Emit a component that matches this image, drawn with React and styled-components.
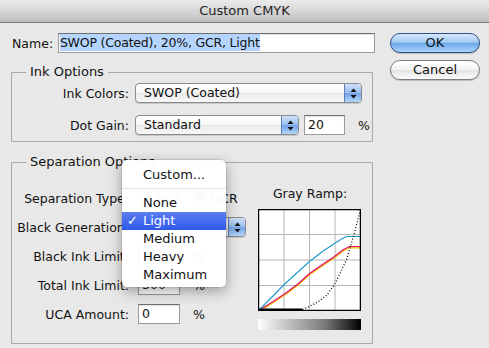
import React from "react";
import styled, { createGlobalStyle } from "styled-components";

const GlobalStyle = createGlobalStyle`
  html, body {
    margin: 0;
    padding: 0;
    background: #e8e8e8;
  }
  body {
    font-family: "DejaVu Sans", "Liberation Sans", sans-serif;
    font-size: 12.5px;
    color: #111;
  }
`;

const cyan = [
  [0, 101], [13, 88], [26.7, 74], [40, 62], [51, 52], [64, 42], [76, 34], [83, 29.5], [88, 27], [102, 27],
];
const red = [
  [0, 101], [13, 93], [26.7, 84], [40, 74], [51, 64], [64, 55], [76, 47], [85, 40], [91, 37], [102, 37],
];
const blackCurve = [
  [44, 100], [51, 97], [60, 92], [68, 86], [76, 75], [82, 63], [88, 50], [95, 27], [102, 0],
];
const pts = (list, dy = 0) => list.map(([x, y]) => `${x},${y + dy}`).join(" ");

const menuItems = ["None", "Light", "Medium", "Heavy", "Maximum"];

const Arrows = () => (
  <svg width="7" height="11" viewBox="0 0 7 11">
    <path d="M3.5 0.5 L6.5 4 L0.5 4 Z" fill="#111" />
    <path d="M3.5 10.5 L6.5 7 L0.5 7 Z" fill="#111" />
  </svg>
);

const Popup = ({ width, value }) => (
  <Select $width={width}>
    <SelectText>{value}</SelectText>
    <SelectArrow>
      <Arrows />
    </SelectArrow>
  </Select>
);

const GrayRamp = () => (
  <Graph width="103" height="102" viewBox="-0.5 -0.5 103 102">
    {[25.5, 51, 76.5].map((v) => (
      <g key={v}>
        <line x1={v} y1="0" x2={v} y2="101" stroke="#b4b4b4" strokeWidth="1" />
        <line x1="0" y1={v - 0.5} x2="102" y2={v - 0.5} stroke="#b4b4b4" strokeWidth="1" />
      </g>
    ))}
    <polyline points={pts(red, 1.3)} fill="none" stroke="#f5b800" strokeWidth="1.2" />
    <polyline points={pts(red)} fill="none" stroke="#e0106a" strokeWidth="1.2" />
    <polyline points={pts(cyan)} fill="none" stroke="#1a9ad0" strokeWidth="1.1" />
    <line x1="0" y1="100" x2="44" y2="100" stroke="#000" strokeWidth="2" />
    <polyline
      points={pts(blackCurve)}
      fill="none"
      stroke="#000"
      strokeWidth="1.2"
      strokeDasharray="1 2"
    />
    <rect x="0" y="0" width="102" height="101" fill="none" stroke="#000" strokeWidth="1.5" />
  </Graph>
);

const App = () => {
  return (
    <Window>
      <GlobalStyle />
      <TitleBar>Custom CMYK</TitleBar>
      <Body>
        <LeftColumn>
          <NameRow>
            <NameLabel>Name:</NameLabel>
            <TextField $width={318} $pl={1}>
              <Selected>SWOP (Coated), 20%, GCR, Light</Selected>
            </TextField>
          </NameRow>

          <Group>
            <Legend>Ink Options</Legend>
            <InkGrid>
              <Label>Ink Colors:</Label>
              <Popup width={227} value="SWOP (Coated)" />
              <Label>Dot Gain:</Label>
              <Inline>
                <Popup width={164} value="Standard" />
                <TextField $width={41} $ml={5}>20</TextField>
                <Percent>%</Percent>
              </Inline>
            </InkGrid>
          </Group>

          <Group $mt={12} $pb={13}>
            <Legend>Separation Options</Legend>
            <SepInner>
              <SepGrid>
                <Label>Separation Type:</Label>
                <Inline>
                  <Radio />
                  <RadioText>UCR</RadioText>
                  <Radio $checked />
                  <RadioText>GCR</RadioText>
                </Inline>
                <Label>Black Generation:</Label>
                <Popup width={108} value="Light" />
                <Label>Black Ink Limit:</Label>
                <Inline>
                  <TextField $width={42}>100</TextField>
                  <Percent>%</Percent>
                </Inline>
                <Label>Total Ink Limit:</Label>
                <Inline>
                  <TextField $width={42}>300</TextField>
                  <Percent>%</Percent>
                </Inline>
                <Label>UCA Amount:</Label>
                <Inline>
                  <TextField $width={42}>0</TextField>
                  <Percent>%</Percent>
                </Inline>
              </SepGrid>
              <RampColumn>
                <RampLabel>Gray Ramp:</RampLabel>
                <GrayRamp />
                <RampBar />
              </RampColumn>
            </SepInner>
          </Group>
        </LeftColumn>

        <Buttons>
          <Button $default>OK</Button>
          <Button>Cancel</Button>
        </Buttons>
      </Body>

      <Menu>
        <MenuItem>Custom...</MenuItem>
        <Separator />
        {menuItems.map((item) => (
          <MenuItem key={item} $active={item === "Light"}>
            {item === "Light" && <Check>✓</Check>}
            {item}
          </MenuItem>
        ))}
      </Menu>
    </Window>
  );
};

const Window = styled.div`
  position: relative;
  width: 489px;
  height: 348px;
  overflow: hidden;
  background: #e8e8e8;
`;

const TitleBar = styled.div`
  height: 22px;
  line-height: 22px;
  text-align: center;
  font-size: 13px;
  color: #222;
  background: linear-gradient(#ececec, #d2d2d2 60%, #bdbdbd);
  border-bottom: 1px solid #7a7a7a;
`;

const Body = styled.div`
  display: grid;
  grid-template-columns: 364px 90px;
  column-gap: 15px;
  padding: 10px 0 0 11px;
`;

const LeftColumn = styled.div`
  display: flex;
  flex-direction: column;
`;

const NameRow = styled.div`
  display: flex;
  align-items: center;
  height: 20px;
`;

const NameLabel = styled.span`
  width: 46px;
  padding-left: 1px;
`;

const TextField = styled.div`
  box-sizing: border-box;
  width: ${(p) => p.$width}px;
  height: 20px;
  margin-left: ${(p) => p.$ml || 0}px;
  padding: 0 3px 0 ${(p) => p.$pl ?? 3}px;
  line-height: 18px;
  background: #fff;
  border: 1px solid #9a9a9a;
  border-top-color: #6f6f6f;
  box-shadow: inset 0 1px 1px rgba(0, 0, 0, 0.12);
  white-space: nowrap;
  overflow: hidden;
`;

const Selected = styled.span`
  background: #b5d5ff;
  padding: 1px 0;
  letter-spacing: -0.2px;
`;

const Group = styled.fieldset`
  box-sizing: border-box;
  width: 362px;
  margin: ${(p) => p.$mt || 11}px 0 0 0;
  padding: 3px 0 ${(p) => p.$pb || 6}px 0;
  border: 1px solid #a8a8a8;
  min-width: 0;
`;

const Legend = styled.legend`
  margin-left: 14px;
  padding: 0 4px;
  line-height: 16px;
  font-size: 13px;
`;

const InkGrid = styled.div`
  display: grid;
  grid-template-columns: 117px 1fr;
  column-gap: 6px;
  row-gap: 12px;
  align-items: center;
`;

const Label = styled.span`
  text-align: right;
  white-space: nowrap;
`;

const Inline = styled.div`
  display: flex;
  align-items: center;
  height: 20px;
`;

const Percent = styled.span`
  margin-left: 13px;
`;

const Select = styled.div`
  box-sizing: border-box;
  display: flex;
  width: ${(p) => p.$width}px;
  height: 20px;
  border: 1px solid #8a8a8a;
  border-radius: 4px;
  background: linear-gradient(#ffffff, #f6f6f6 50%, #e9e9e9 51%, #f7f7f7);
  box-shadow: 0 1px 1px rgba(0, 0, 0, 0.15);
  overflow: hidden;
`;

const SelectText = styled.span`
  flex: 1;
  padding-left: 8px;
  line-height: 18px;
  white-space: nowrap;
`;

const SelectArrow = styled.span`
  display: flex;
  align-items: center;
  justify-content: center;
  width: 16px;
  border-left: 1px solid #5d80b8;
  background: linear-gradient(#cfe0f8, #97bdf0 50%, #6fa2e8 51%, #b4d5f8);
`;

const SepInner = styled.div`
  display: flex;
  gap: 12px;
`;

const SepGrid = styled.div`
  display: grid;
  width: 234px;
  grid-template-columns: 117px 1fr;
  column-gap: 9px;
  row-gap: 9px;
  align-items: center;
  padding-top: 15px;
  align-content: start;
`;

const Radio = styled.span`
  box-sizing: border-box;
  width: 14px;
  height: 14px;
  border-radius: 50%;
  border: 1px solid #8a8a8a;
  background: ${(p) =>
    p.$checked
      ? "radial-gradient(circle, #222 0 2px, #8fbaf0 3px, #5d95e3)"
      : "linear-gradient(#fff, #e6e6e6)"};
`;

const RadioText = styled.span`
  margin: 0 10px 0 4px;
`;

const RampColumn = styled.div`
  display: flex;
  flex-direction: column;
  align-items: flex-start;
  width: 104px;
  padding-top: 13px;
`;

const RampLabel = styled.div`
  align-self: center;
  line-height: 16px;
  margin-bottom: 7px;
`;

const Graph = styled.svg`
  display: block;
  background: #fff;
`;

const RampBar = styled.div`
  width: 103px;
  height: 11px;
  margin-top: 8px;
  background: linear-gradient(to right, #fff, #bfbfbf 30%, #7a7a7a 65%, #000);
`;

const Buttons = styled.div`
  display: flex;
  flex-direction: column;
  gap: 7px;
`;

const Button = styled.div`
  box-sizing: border-box;
  height: 20px;
  line-height: 18px;
  text-align: center;
  font-size: 13px;
  border-radius: 10px;
  border: 1px solid ${(p) => (p.$default ? "#2f4f8a" : "#7c7c7c")};
  background: ${(p) =>
    p.$default
      ? "linear-gradient(#d6e8fc, #a4cbf3 45%, #6ea9ea 52%, #a8d4fb)"
      : "linear-gradient(#ffffff, #f3f3f3 50%, #e4e4e4 52%, #fbfbfb)"};
  box-shadow: 0 1px 1px rgba(0, 0, 0, 0.2);
`;

const Menu = styled.div`
  position: absolute;
  left: 122px;
  top: 160px;
  width: 104px;
  padding: 6px 0 3px;
  background: rgba(255, 255, 255, 0.97);
  border-radius: 5px;
  box-shadow: 0 4px 14px rgba(0, 0, 0, 0.35), 0 0 0 1px rgba(0, 0, 0, 0.08);
`;

const MenuItem = styled.div`
  position: relative;
  height: 18px;
  line-height: 18px;
  padding-left: 21px;
  font-size: 13px;
  color: ${(p) => (p.$active ? "#fff" : "#111")};
  background: ${(p) => (p.$active ? "linear-gradient(#5c7ef2, #2f58ea)" : "transparent")};
`;

const Check = styled.span`
  position: absolute;
  left: 5px;
`;

const Separator = styled.div`
  height: 1px;
  margin: 4px 0 5px;
  background: #e2e2e2;
`;

export default App;
